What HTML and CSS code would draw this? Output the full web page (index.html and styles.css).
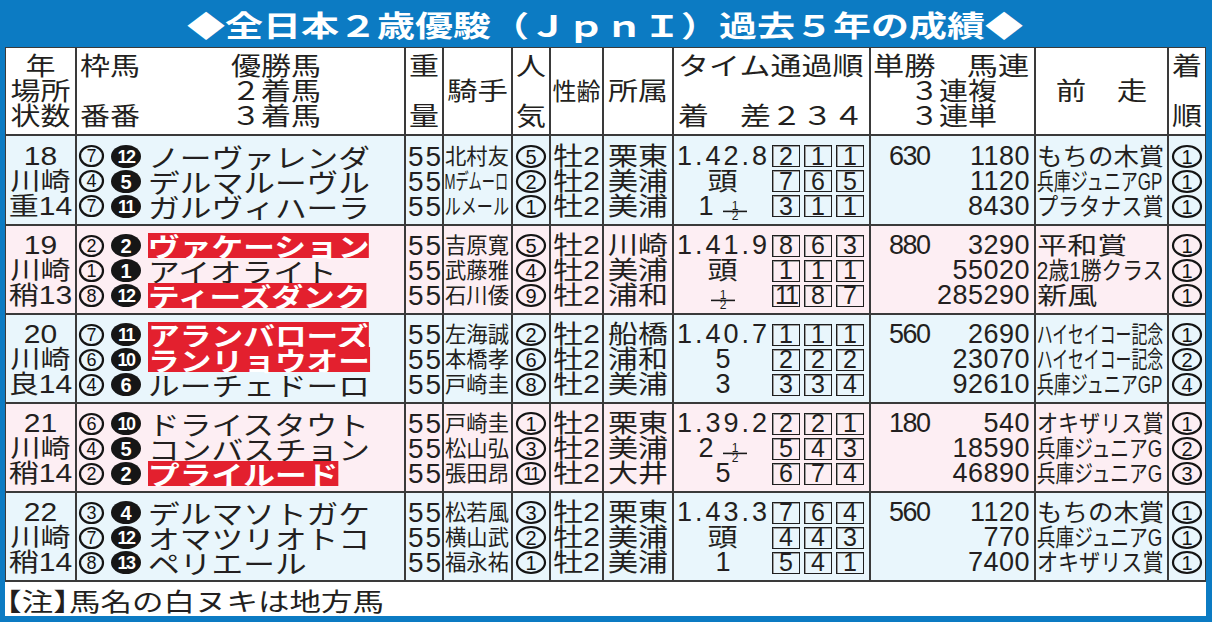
FILE: index.html
```html
<!DOCTYPE html>
<html lang="ja">
<head>
<meta charset="utf-8">
<title>全日本２歳優駿 過去５年の成績</title>
<link rel="stylesheet" href="styles.css">
</head>
<body>
<div class="frame">
  <h1 class="title"><span>◆全日本２歳優駿（ＪｐｎＩ）過去５年の成績◆</span></h1>
  <div class="sheet">
    <div class="grid">
      <!-- header -->
      <div class="h"><div class="ln sx120">年</div><div class="ln sx120">場所</div><div class="ln sx120">状数</div></div>
      <div class="h h2">
        <div class="hcol"><div class="ln ol sx120">枠馬</div><div class="ln"></div><div class="ln ol sx120">番番</div></div>
        <div class="hcol r"><div class="ln or sx120">優勝馬</div><div class="ln or sx120">２着馬</div><div class="ln or sx120">３着馬</div></div>
      </div>
      <div class="h"><div class="ln sx120">重</div><div class="ln"></div><div class="ln sx120">量</div></div>
      <div class="h"><div class="ln sx122">騎手</div></div>
      <div class="h"><div class="ln sx120">人</div><div class="ln"></div><div class="ln sx120">気</div></div>
      <div class="h"><div class="ln s24">性齢</div></div>
      <div class="h"><div class="ln sx120">所属</div></div>
      <div class="h h8"><div class="ln tl ol sx124">タイム通過順</div><div class="ln"></div><div class="ln tl ol sx124">着　差２３４</div></div>
      <div class="h h9"><div class="ln tl ol sx125">単勝　馬連</div><div class="ln sx116">３連複</div><div class="ln sx116">３連単</div></div>
      <div class="h"><div class="ln sx122">前　走</div></div>
      <div class="h"><div class="ln sx120">着</div><div class="ln"></div><div class="ln sx120">順</div></div>

      <!-- 2018 -->
      <div class="row b">
        <div class="c"><div class="ln sx120">18</div><div class="ln sx120">川崎</div><div class="ln sx120">重14</div></div>
        <div class="c hs">
          <div class="ln hr"><svg class="cw" width="25" height="22" viewBox="0 0 25 22"><ellipse cx="12.5" cy="11" rx="11.5" ry="10"/><text x="12.5" y="17.3">7</text></svg><svg class="cb" width="30" height="23" viewBox="0 0 30 23"><ellipse cx="15" cy="11.5" rx="15" ry="11.5"/><text class="two" x="15" y="18">12</text></svg><span class="nm">ノーヴァレンダ</span></div>
          <div class="ln hr"><svg class="cw" width="25" height="22" viewBox="0 0 25 22"><ellipse cx="12.5" cy="11" rx="11.5" ry="10"/><text x="12.5" y="17.3">4</text></svg><svg class="cb" width="30" height="23" viewBox="0 0 30 23"><ellipse cx="15" cy="11.5" rx="15" ry="11.5"/><text x="15" y="18.7">5</text></svg><span class="nm">デルマルーヴル</span></div>
          <div class="ln hr"><svg class="cw" width="25" height="22" viewBox="0 0 25 22"><ellipse cx="12.5" cy="11" rx="11.5" ry="10"/><text x="12.5" y="17.3">7</text></svg><svg class="cb" width="30" height="23" viewBox="0 0 30 23"><ellipse cx="15" cy="11.5" rx="15" ry="11.5"/><text class="two" x="15" y="18">11</text></svg><span class="nm">ガルヴィハーラ</span></div>
        </div>
        <div class="c n55"><div class="ln">55</div><div class="ln">55</div><div class="ln">55</div></div>
        <div class="c jk"><div class="ln j3">北村友</div><div class="ln jm">Mデムーロ</div><div class="ln j4">ルメール</div></div>
        <div class="c pcs">
          <div class="ln pc"><svg class="cp" width="30" height="23" viewBox="0 0 30 23"><ellipse cx="15" cy="11.5" rx="14" ry="10.5"/><text x="15" y="18.6">5</text></svg></div>
          <div class="ln pc"><svg class="cp" width="30" height="23" viewBox="0 0 30 23"><ellipse cx="15" cy="11.5" rx="14" ry="10.5"/><text x="15" y="18.6">2</text></svg></div>
          <div class="ln pc"><svg class="cp" width="30" height="23" viewBox="0 0 30 23"><ellipse cx="15" cy="11.5" rx="14" ry="10.5"/><text x="15" y="18.6">1</text></svg></div>
        </div>
        <div class="c"><div class="ln sx120">牡2</div><div class="ln sx120">牡2</div><div class="ln sx120">牡2</div></div>
        <div class="c"><div class="ln sx120">栗東</div><div class="ln sx120">美浦</div><div class="ln sx120">美浦</div></div>
        <div class="c tc">
          <div class="ln"><span class="mg tm">1.42.8</span><span class="bx">2</span><span class="bx">1</span><span class="bx">1</span></div>
          <div class="ln"><span class="mg"><span class="k">頭</span></span><span class="bx">7</span><span class="bx">6</span><span class="bx">5</span></div>
          <div class="ln"><span class="mg">1<svg class="fq" width="26" height="18" viewBox="0 0 26 18"><text x="13" y="8">1</text><line x1="1" y1="9.4" x2="25" y2="9.4"/><text x="13" y="18.4">2</text></svg></span><span class="bx">3</span><span class="bx">1</span><span class="bx">1</span></div>
        </div>
        <div class="c od"><div class="ln o1"><span class="ws">630</span><span>1180</span></div><div class="ln">1120</div><div class="ln">8430</div></div>
        <div class="c pv"><div class="ln f106">もちの木賞</div><div class="ln f71">兵庫ジュニアGP</div><div class="ln f88">プラタナス賞</div></div>
        <div class="c pcs">
          <div class="ln pc"><svg class="cp" width="30" height="23" viewBox="0 0 30 23"><ellipse cx="15" cy="11.5" rx="14" ry="10.5"/><text x="15" y="18.6">1</text></svg></div>
          <div class="ln pc"><svg class="cp" width="30" height="23" viewBox="0 0 30 23"><ellipse cx="15" cy="11.5" rx="14" ry="10.5"/><text x="15" y="18.6">1</text></svg></div>
          <div class="ln pc"><svg class="cp" width="30" height="23" viewBox="0 0 30 23"><ellipse cx="15" cy="11.5" rx="14" ry="10.5"/><text x="15" y="18.6">1</text></svg></div>
        </div>
      </div>

      <!-- 2019 -->
      <div class="row p">
        <div class="c"><div class="ln sx120">19</div><div class="ln sx120">川崎</div><div class="ln sx120">稍13</div></div>
        <div class="c hs">
          <div class="ln hr"><svg class="cw" width="25" height="22" viewBox="0 0 25 22"><ellipse cx="12.5" cy="11" rx="11.5" ry="10"/><text x="12.5" y="17.3">2</text></svg><svg class="cb" width="30" height="23" viewBox="0 0 30 23"><ellipse cx="15" cy="11.5" rx="15" ry="11.5"/><text x="15" y="18.7">2</text></svg><span class="nm red">ヴァケーション</span></div>
          <div class="ln hr"><svg class="cw" width="25" height="22" viewBox="0 0 25 22"><ellipse cx="12.5" cy="11" rx="11.5" ry="10"/><text x="12.5" y="17.3">1</text></svg><svg class="cb" width="30" height="23" viewBox="0 0 30 23"><ellipse cx="15" cy="11.5" rx="15" ry="11.5"/><text x="15" y="18.7">1</text></svg><span class="nm">アイオライト</span></div>
          <div class="ln hr"><svg class="cw" width="25" height="22" viewBox="0 0 25 22"><ellipse cx="12.5" cy="11" rx="11.5" ry="10"/><text x="12.5" y="17.3">8</text></svg><svg class="cb" width="30" height="23" viewBox="0 0 30 23"><ellipse cx="15" cy="11.5" rx="15" ry="11.5"/><text class="two" x="15" y="18">12</text></svg><span class="nm red">ティーズダンク</span></div>
        </div>
        <div class="c n55"><div class="ln">55</div><div class="ln">55</div><div class="ln">55</div></div>
        <div class="c jk"><div class="ln j3">吉原寛</div><div class="ln j3">武藤雅</div><div class="ln j3">石川倭</div></div>
        <div class="c pcs">
          <div class="ln pc"><svg class="cp" width="30" height="23" viewBox="0 0 30 23"><ellipse cx="15" cy="11.5" rx="14" ry="10.5"/><text x="15" y="18.6">5</text></svg></div>
          <div class="ln pc"><svg class="cp" width="30" height="23" viewBox="0 0 30 23"><ellipse cx="15" cy="11.5" rx="14" ry="10.5"/><text x="15" y="18.6">4</text></svg></div>
          <div class="ln pc"><svg class="cp" width="30" height="23" viewBox="0 0 30 23"><ellipse cx="15" cy="11.5" rx="14" ry="10.5"/><text x="15" y="18.6">9</text></svg></div>
        </div>
        <div class="c"><div class="ln sx120">牡2</div><div class="ln sx120">牡2</div><div class="ln sx120">牡2</div></div>
        <div class="c"><div class="ln sx120">川崎</div><div class="ln sx120">美浦</div><div class="ln sx120">浦和</div></div>
        <div class="c tc">
          <div class="ln"><span class="mg tm">1.41.9</span><span class="bx">8</span><span class="bx">6</span><span class="bx">3</span></div>
          <div class="ln"><span class="mg"><span class="k">頭</span></span><span class="bx">1</span><span class="bx">1</span><span class="bx">1</span></div>
          <div class="ln"><span class="mg"><svg class="fq solo" width="26" height="18" viewBox="0 0 26 18"><text x="13" y="8">1</text><line x1="1" y1="9.4" x2="25" y2="9.4"/><text x="13" y="18.4">2</text></svg></span><span class="bx dd">11</span><span class="bx">8</span><span class="bx">7</span></div>
        </div>
        <div class="c od"><div class="ln o1"><span class="ws">880</span><span>3290</span></div><div class="ln">55020</div><div class="ln">285290</div></div>
        <div class="c pv"><div class="ln f125">平和賞</div><div class="ln f87">2歳1勝クラス</div><div class="ln f125">新風</div></div>
        <div class="c pcs">
          <div class="ln pc"><svg class="cp" width="30" height="23" viewBox="0 0 30 23"><ellipse cx="15" cy="11.5" rx="14" ry="10.5"/><text x="15" y="18.6">1</text></svg></div>
          <div class="ln pc"><svg class="cp" width="30" height="23" viewBox="0 0 30 23"><ellipse cx="15" cy="11.5" rx="14" ry="10.5"/><text x="15" y="18.6">1</text></svg></div>
          <div class="ln pc"><svg class="cp" width="30" height="23" viewBox="0 0 30 23"><ellipse cx="15" cy="11.5" rx="14" ry="10.5"/><text x="15" y="18.6">1</text></svg></div>
        </div>
      </div>

      <!-- 2020 -->
      <div class="row b">
        <div class="c"><div class="ln sx120">20</div><div class="ln sx120">川崎</div><div class="ln sx120">良14</div></div>
        <div class="c hs">
          <div class="ln hr"><svg class="cw" width="25" height="22" viewBox="0 0 25 22"><ellipse cx="12.5" cy="11" rx="11.5" ry="10"/><text x="12.5" y="17.3">7</text></svg><svg class="cb" width="30" height="23" viewBox="0 0 30 23"><ellipse cx="15" cy="11.5" rx="15" ry="11.5"/><text class="two" x="15" y="18">11</text></svg><span class="nm red">アランバローズ</span></div>
          <div class="ln hr"><svg class="cw" width="25" height="22" viewBox="0 0 25 22"><ellipse cx="12.5" cy="11" rx="11.5" ry="10"/><text x="12.5" y="17.3">6</text></svg><svg class="cb" width="30" height="23" viewBox="0 0 30 23"><ellipse cx="15" cy="11.5" rx="15" ry="11.5"/><text class="two" x="15" y="18">10</text></svg><span class="nm red">ランリョウオー</span></div>
          <div class="ln hr"><svg class="cw" width="25" height="22" viewBox="0 0 25 22"><ellipse cx="12.5" cy="11" rx="11.5" ry="10"/><text x="12.5" y="17.3">4</text></svg><svg class="cb" width="30" height="23" viewBox="0 0 30 23"><ellipse cx="15" cy="11.5" rx="15" ry="11.5"/><text x="15" y="18.7">6</text></svg><span class="nm">ルーチェドーロ</span></div>
        </div>
        <div class="c n55"><div class="ln">55</div><div class="ln">55</div><div class="ln">55</div></div>
        <div class="c jk"><div class="ln j3">左海誠</div><div class="ln j3">本橋孝</div><div class="ln j3">戸崎圭</div></div>
        <div class="c pcs">
          <div class="ln pc"><svg class="cp" width="30" height="23" viewBox="0 0 30 23"><ellipse cx="15" cy="11.5" rx="14" ry="10.5"/><text x="15" y="18.6">2</text></svg></div>
          <div class="ln pc"><svg class="cp" width="30" height="23" viewBox="0 0 30 23"><ellipse cx="15" cy="11.5" rx="14" ry="10.5"/><text x="15" y="18.6">6</text></svg></div>
          <div class="ln pc"><svg class="cp" width="30" height="23" viewBox="0 0 30 23"><ellipse cx="15" cy="11.5" rx="14" ry="10.5"/><text x="15" y="18.6">8</text></svg></div>
        </div>
        <div class="c"><div class="ln sx120">牡2</div><div class="ln sx120">牡2</div><div class="ln sx120">牡2</div></div>
        <div class="c"><div class="ln sx120">船橋</div><div class="ln sx120">浦和</div><div class="ln sx120">美浦</div></div>
        <div class="c tc">
          <div class="ln"><span class="mg tm">1.40.7</span><span class="bx">1</span><span class="bx">1</span><span class="bx">1</span></div>
          <div class="ln"><span class="mg">5</span><span class="bx">2</span><span class="bx">2</span><span class="bx">2</span></div>
          <div class="ln"><span class="mg">3</span><span class="bx">3</span><span class="bx">3</span><span class="bx">4</span></div>
        </div>
        <div class="c od"><div class="ln o1"><span class="ws">560</span><span>2690</span></div><div class="ln">23070</div><div class="ln">92610</div></div>
        <div class="c pv"><div class="ln f66">ハイセイコー記念</div><div class="ln f66">ハイセイコー記念</div><div class="ln f71">兵庫ジュニアGP</div></div>
        <div class="c pcs">
          <div class="ln pc"><svg class="cp" width="30" height="23" viewBox="0 0 30 23"><ellipse cx="15" cy="11.5" rx="14" ry="10.5"/><text x="15" y="18.6">1</text></svg></div>
          <div class="ln pc"><svg class="cp" width="30" height="23" viewBox="0 0 30 23"><ellipse cx="15" cy="11.5" rx="14" ry="10.5"/><text x="15" y="18.6">2</text></svg></div>
          <div class="ln pc"><svg class="cp" width="30" height="23" viewBox="0 0 30 23"><ellipse cx="15" cy="11.5" rx="14" ry="10.5"/><text x="15" y="18.6">4</text></svg></div>
        </div>
      </div>

      <!-- 2021 -->
      <div class="row p">
        <div class="c"><div class="ln sx120">21</div><div class="ln sx120">川崎</div><div class="ln sx120">稍14</div></div>
        <div class="c hs">
          <div class="ln hr"><svg class="cw" width="25" height="22" viewBox="0 0 25 22"><ellipse cx="12.5" cy="11" rx="11.5" ry="10"/><text x="12.5" y="17.3">6</text></svg><svg class="cb" width="30" height="23" viewBox="0 0 30 23"><ellipse cx="15" cy="11.5" rx="15" ry="11.5"/><text class="two" x="15" y="18">10</text></svg><span class="nm">ドライスタウト</span></div>
          <div class="ln hr"><svg class="cw" width="25" height="22" viewBox="0 0 25 22"><ellipse cx="12.5" cy="11" rx="11.5" ry="10"/><text x="12.5" y="17.3">4</text></svg><svg class="cb" width="30" height="23" viewBox="0 0 30 23"><ellipse cx="15" cy="11.5" rx="15" ry="11.5"/><text x="15" y="18.7">5</text></svg><span class="nm">コンバスチョン</span></div>
          <div class="ln hr"><svg class="cw" width="25" height="22" viewBox="0 0 25 22"><ellipse cx="12.5" cy="11" rx="11.5" ry="10"/><text x="12.5" y="17.3">2</text></svg><svg class="cb" width="30" height="23" viewBox="0 0 30 23"><ellipse cx="15" cy="11.5" rx="15" ry="11.5"/><text x="15" y="18.7">2</text></svg><span class="nm red">プライルード</span></div>
        </div>
        <div class="c n55"><div class="ln">55</div><div class="ln">55</div><div class="ln">55</div></div>
        <div class="c jk"><div class="ln j3">戸崎圭</div><div class="ln j3">松山弘</div><div class="ln j3">張田昂</div></div>
        <div class="c pcs">
          <div class="ln pc"><svg class="cp" width="30" height="23" viewBox="0 0 30 23"><ellipse cx="15" cy="11.5" rx="14" ry="10.5"/><text x="15" y="18.6">1</text></svg></div>
          <div class="ln pc"><svg class="cp" width="30" height="23" viewBox="0 0 30 23"><ellipse cx="15" cy="11.5" rx="14" ry="10.5"/><text x="15" y="18.6">3</text></svg></div>
          <div class="ln pc"><svg class="cp" width="30" height="23" viewBox="0 0 30 23"><ellipse cx="15" cy="11.5" rx="14" ry="10.5"/><text class="two" x="15" y="18.3">11</text></svg></div>
        </div>
        <div class="c"><div class="ln sx120">牡2</div><div class="ln sx120">牡2</div><div class="ln sx120">牡2</div></div>
        <div class="c"><div class="ln sx120">栗東</div><div class="ln sx120">美浦</div><div class="ln sx120">大井</div></div>
        <div class="c tc">
          <div class="ln"><span class="mg tm">1.39.2</span><span class="bx">2</span><span class="bx">2</span><span class="bx">1</span></div>
          <div class="ln"><span class="mg">2<svg class="fq" width="26" height="18" viewBox="0 0 26 18"><text x="13" y="8">1</text><line x1="1" y1="9.4" x2="25" y2="9.4"/><text x="13" y="18.4">2</text></svg></span><span class="bx">5</span><span class="bx">4</span><span class="bx">3</span></div>
          <div class="ln"><span class="mg">5</span><span class="bx">6</span><span class="bx">7</span><span class="bx">4</span></div>
        </div>
        <div class="c od"><div class="ln o1"><span class="ws">180</span><span>540</span></div><div class="ln">18590</div><div class="ln">46890</div></div>
        <div class="c pv"><div class="ln f88">オキザリス賞</div><div class="ln f78">兵庫ジュニアG</div><div class="ln f78">兵庫ジュニアG</div></div>
        <div class="c pcs">
          <div class="ln pc"><svg class="cp" width="30" height="23" viewBox="0 0 30 23"><ellipse cx="15" cy="11.5" rx="14" ry="10.5"/><text x="15" y="18.6">1</text></svg></div>
          <div class="ln pc"><svg class="cp" width="30" height="23" viewBox="0 0 30 23"><ellipse cx="15" cy="11.5" rx="14" ry="10.5"/><text x="15" y="18.6">2</text></svg></div>
          <div class="ln pc"><svg class="cp" width="30" height="23" viewBox="0 0 30 23"><ellipse cx="15" cy="11.5" rx="14" ry="10.5"/><text x="15" y="18.6">3</text></svg></div>
        </div>
      </div>

      <!-- 2022 -->
      <div class="row b">
        <div class="c"><div class="ln sx120">22</div><div class="ln sx120">川崎</div><div class="ln sx120">稍14</div></div>
        <div class="c hs">
          <div class="ln hr"><svg class="cw" width="25" height="22" viewBox="0 0 25 22"><ellipse cx="12.5" cy="11" rx="11.5" ry="10"/><text x="12.5" y="17.3">3</text></svg><svg class="cb" width="30" height="23" viewBox="0 0 30 23"><ellipse cx="15" cy="11.5" rx="15" ry="11.5"/><text x="15" y="18.7">4</text></svg><span class="nm">デルマソトガケ</span></div>
          <div class="ln hr"><svg class="cw" width="25" height="22" viewBox="0 0 25 22"><ellipse cx="12.5" cy="11" rx="11.5" ry="10"/><text x="12.5" y="17.3">7</text></svg><svg class="cb" width="30" height="23" viewBox="0 0 30 23"><ellipse cx="15" cy="11.5" rx="15" ry="11.5"/><text class="two" x="15" y="18">12</text></svg><span class="nm">オマツリオトコ</span></div>
          <div class="ln hr"><svg class="cw" width="25" height="22" viewBox="0 0 25 22"><ellipse cx="12.5" cy="11" rx="11.5" ry="10"/><text x="12.5" y="17.3">8</text></svg><svg class="cb" width="30" height="23" viewBox="0 0 30 23"><ellipse cx="15" cy="11.5" rx="15" ry="11.5"/><text class="two" x="15" y="18">13</text></svg><span class="nm">ペリエール</span></div>
        </div>
        <div class="c n55"><div class="ln">55</div><div class="ln">55</div><div class="ln">55</div></div>
        <div class="c jk"><div class="ln j3">松若風</div><div class="ln j3">横山武</div><div class="ln j3">福永祐</div></div>
        <div class="c pcs">
          <div class="ln pc"><svg class="cp" width="30" height="23" viewBox="0 0 30 23"><ellipse cx="15" cy="11.5" rx="14" ry="10.5"/><text x="15" y="18.6">3</text></svg></div>
          <div class="ln pc"><svg class="cp" width="30" height="23" viewBox="0 0 30 23"><ellipse cx="15" cy="11.5" rx="14" ry="10.5"/><text x="15" y="18.6">2</text></svg></div>
          <div class="ln pc"><svg class="cp" width="30" height="23" viewBox="0 0 30 23"><ellipse cx="15" cy="11.5" rx="14" ry="10.5"/><text x="15" y="18.6">1</text></svg></div>
        </div>
        <div class="c"><div class="ln sx120">牡2</div><div class="ln sx120">牡2</div><div class="ln sx120">牡2</div></div>
        <div class="c"><div class="ln sx120">栗東</div><div class="ln sx120">美浦</div><div class="ln sx120">美浦</div></div>
        <div class="c tc">
          <div class="ln"><span class="mg tm">1.43.3</span><span class="bx">7</span><span class="bx">6</span><span class="bx">4</span></div>
          <div class="ln"><span class="mg"><span class="k">頭</span></span><span class="bx">4</span><span class="bx">4</span><span class="bx">3</span></div>
          <div class="ln"><span class="mg">1</span><span class="bx">5</span><span class="bx">4</span><span class="bx">1</span></div>
        </div>
        <div class="c od"><div class="ln o1"><span class="ws">560</span><span>1120</span></div><div class="ln">770</div><div class="ln">7400</div></div>
        <div class="c pv"><div class="ln f106">もちの木賞</div><div class="ln f78">兵庫ジュニアG</div><div class="ln f88">オキザリス賞</div></div>
        <div class="c pcs">
          <div class="ln pc"><svg class="cp" width="30" height="23" viewBox="0 0 30 23"><ellipse cx="15" cy="11.5" rx="14" ry="10.5"/><text x="15" y="18.6">1</text></svg></div>
          <div class="ln pc"><svg class="cp" width="30" height="23" viewBox="0 0 30 23"><ellipse cx="15" cy="11.5" rx="14" ry="10.5"/><text x="15" y="18.6">1</text></svg></div>
          <div class="ln pc"><svg class="cp" width="30" height="23" viewBox="0 0 30 23"><ellipse cx="15" cy="11.5" rx="14" ry="10.5"/><text x="15" y="18.6">1</text></svg></div>
        </div>
      </div>
    </div>
    <div class="note"><span class="nt"><span class="hb">【注】</span>馬名の白ヌキは地方馬</span></div>
  </div>
</div>
</body>
</html>
```

FILE: styles.css
```css
* { box-sizing: border-box; }
html, body { margin: 0; padding: 0; }
body {
  width: 1212px;
  height: 622px;
  overflow: hidden;
  background: #0c7bc3;
  color: #231f20;
  font-family: "Liberation Sans", "Noto Sans CJK JP", sans-serif;
}
.frame { padding: 0 6px 6px 5px; }

.title {
  margin: 0;
  height: 47px;
  display: flex;
  align-items: center;
  justify-content: center;
  color: #fff;
  font-family: "Noto Sans CJK JP", sans-serif;
  font-weight: 700;
  font-size: 29px;
}
.title span { display: inline-block; white-space: nowrap; transform: scaleX(1.31); }

.sheet { width: 1201px; background: #fff; }
.grid {
  display: grid;
  grid-template-columns: 69px 327px 36px 67px 36px 51px 68px 195px 163px 131px 36px;
  grid-template-rows: 86px 88px 87px 87px 87px 87px;
  gap: 2px;
  padding: 1px 1px 2px;
  background: #3a3a3a;
}
.grid > div, .row > div { background: #fff; min-width: 0; }
.row { display: contents; }
.row.b > div { background: #e9f6fc; }
.row.p > div { background: #fdeef3; }

/* lines */
.ln { height: 25px; line-height: 25px; white-space: nowrap; }
.tl { text-align: left; }
.ol { transform-origin: 0 50%; }
.or { transform-origin: 100% 50%; }
.sx116 { transform: scaleX(1.16); }
.sx120 { transform: scaleX(1.2); }
.sx122 { transform: scaleX(1.22); }
.sx124 { transform: scaleX(1.24); }
.sx125 { transform: scaleX(1.25); }
.s24 { font-size: 24px; }

/* header */
.h {
  display: flex;
  flex-direction: column;
  justify-content: center;
  text-align: center;
  font-size: 25px;
}
.h.h2 {
  display: grid;
  grid-template-columns: 148px 93px;
  justify-content: start;
  align-content: center;
  padding-left: 3px;
  text-align: left;
}
.hcol { display: flex; flex-direction: column; }
.hcol.r { text-align: right; }
.h8 { padding-left: 4px; }
.h9 { padding-left: 2px; }

/* body cells */
.c {
  display: flex;
  flex-direction: column;
  justify-content: center;
  padding-top: 2px;
  text-align: center;
  font-size: 25px;
}

/* circled numbers (svg) */
svg text { font-family: "Liberation Sans", sans-serif; text-anchor: middle; }
.cw, .cb, .cp { display: block; flex: none; overflow: visible; }
.cw ellipse, .cp ellipse { fill: none; stroke: #141414; stroke-width: 2.2; }
.cw text { font-size: 18px; fill: #141414; }
.cp text { font-size: 20px; fill: #141414; }
.cp text.two { font-size: 18px; letter-spacing: -1.5px; }
.cb { margin-left: 7px; }
.cb ellipse { fill: #161616; }
.cb text { font-size: 20px; font-weight: 700; fill: #fff; }
.cb text.two { font-size: 18px; letter-spacing: -1.5px; }

/* horses */
.hr { display: flex; align-items: center; padding-left: 2px; }
.nm {
  flex: none;
  margin-left: 7px;
  height: 25px;
  line-height: 25px;
  font-size: 26px;
  font-family: "Noto Sans CJK JP", sans-serif;
  transform: scaleX(1.22);
  transform-origin: 0 50%;
}
.nm.red { background: #e3202e; color: #fff; font-weight: 700; }

/* weight */
.n55 .ln { font-size: 28px; letter-spacing: 2px; padding-left: 2px; }

/* jockey */
.jk .ln { text-align: left; padding-left: 1px; font-size: 22px; transform-origin: 0 50%; }
.j3 { transform: scaleX(0.97); }
.j4 { transform: scaleX(0.73); }
.jm { transform: scaleX(0.6); }

/* popularity / finish */
.pc { display: flex; align-items: center; justify-content: center; }

/* time / margin / positions */
.tc .ln { display: flex; align-items: center; }
.mg {
  flex: none;
  width: 98px;
  display: flex;
  align-items: center;
  justify-content: center;
  font-size: 27px;
}
.mg.tm { justify-content: flex-start; padding-left: 3px; letter-spacing: 3px; }
.k { display: inline-block; font-size: 25px; transform: scaleX(1.2); }
.fq { display: block; flex: none; margin-left: 8px; margin-top: 9px; overflow: visible; }
.fq.solo { margin-left: 0; }
.fq text { font-size: 12px; fill: #1a1a1a; }
.fq line { stroke: #1a1a1a; stroke-width: 1.6; }
.bx {
  flex: none;
  width: 28px;
  height: 22px;
  margin-right: 4px;
  border: 1px solid #1e1e1e;
  box-shadow: inset 1px 1px 0 #9c9c9c;
  display: flex;
  align-items: center;
  justify-content: center;
  font-size: 25px;
  line-height: 1;
}
.dd { letter-spacing: -2px; }

/* odds */
.od .ln { text-align: right; padding-right: 4px; font-size: 27px; letter-spacing: 0.5px; }
.od .o1 { display: flex; justify-content: space-between; }
.ws { padding-left: 18px; letter-spacing: -1.5px; }

/* previous race */
.pv .ln { text-align: left; padding-left: 1px; font-size: 24px; transform-origin: 0 50%; }
.f66 { transform: scaleX(0.66); }
.f71 { transform: scaleX(0.71); }
.f78 { transform: scaleX(0.78); }
.f87 { transform: scaleX(0.865); }
.f88 { transform: scaleX(0.88); }
.f106 { transform: scaleX(1.06); }
.f125 { transform: scaleX(1.25); }

/* note */
.note {
  height: 34px;
  padding: 3px 0 0 1px;
  line-height: 31px;
  font-size: 25px;
  background: #fff;
}
.nt {
  display: inline-block;
  white-space: nowrap;
  font-family: "Noto Sans CJK JP", sans-serif;
  transform: scaleX(1.26);
  transform-origin: 0 50%;
}
.hb { font-feature-settings: "halt"; }
```
